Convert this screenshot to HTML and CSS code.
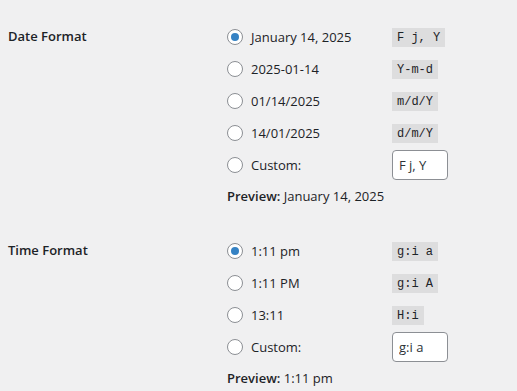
FILE: index.html
```html
<!DOCTYPE html>
<html lang="en">
<head>
  <meta charset="UTF-8">
  <title>General Settings</title>
  <link rel="stylesheet" href="styles.css">
</head>
<body>

  <div class="form-table">

    <div class="row">
      <div class="th">Date Format</div>
      <div class="td">
        <label class="opt">
          <span class="radio checked"></span>
          <span class="date-time-text">January 14, 2025</span>
          <code>F j, Y</code>
        </label>
        <label class="opt">
          <span class="radio"></span>
          <span class="date-time-text">2025-01-14</span>
          <code>Y-m-d</code>
        </label>
        <label class="opt">
          <span class="radio"></span>
          <span class="date-time-text">01/14/2025</span>
          <code>m/d/Y</code>
        </label>
        <label class="opt">
          <span class="radio"></span>
          <span class="date-time-text">14/01/2025</span>
          <code>d/m/Y</code>
        </label>
        <label class="opt">
          <span class="radio"></span>
          <span class="date-time-text">Custom:</span>
          <input class="small-text" type="text" value="F j, Y">
        </label>
        <p class="preview"><strong>Preview:</strong> January 14, 2025</p>
      </div>
    </div>

    <div class="row">
      <div class="th">Time Format</div>
      <div class="td">
        <label class="opt">
          <span class="radio checked"></span>
          <span class="date-time-text">1:11 pm</span>
          <code>g:i a</code>
        </label>
        <label class="opt">
          <span class="radio"></span>
          <span class="date-time-text">1:11 PM</span>
          <code>g:i A</code>
        </label>
        <label class="opt">
          <span class="radio"></span>
          <span class="date-time-text">13:11</span>
          <code>H:i</code>
        </label>
        <label class="opt">
          <span class="radio"></span>
          <span class="date-time-text">Custom:</span>
          <input class="small-text" type="text" value="g:i a">
        </label>
        <p class="preview"><strong>Preview:</strong> 1:11 pm</p>
      </div>
    </div>

  </div>

</body>
</html>
```

FILE: styles.css
```css
body {
  margin: 0;
  padding: 0;
  background-color: #f0f0f1;
  color: #1d2327;
  font-family: 'Open Sans', 'Noto Sans', sans-serif;
  font-size: 13px;
  overflow: hidden;
}

.form-table {
  padding: 21px 0 0 8px;
}

.row {
  display: flex;
  margin-bottom: 24px;
}

.th {
  width: 219px;
  flex-shrink: 0;
  font-weight: 600;
  font-size: 13px;
  line-height: 30px;
}

.td {
  display: flex;
  flex-direction: column;
}

.opt {
  display: flex;
  align-items: center;
  height: 32px;
}

.radio {
  box-sizing: border-box;
  width: 16px;
  height: 16px;
  border: 1px solid #8c8f94;
  border-radius: 50%;
  background: #fff;
  margin-right: 8px;
  display: flex;
  align-items: center;
  justify-content: center;
}

.radio.checked::before {
  content: "";
  width: 8px;
  height: 8px;
  border-radius: 50%;
  background: #3582c4;
}

.date-time-text {
  display: inline-block;
  min-width: 141px;
}

code {
  font-family: 'Liberation Mono', monospace;
  font-size: 12px;
  background: rgba(0, 0, 0, 0.08);
  padding: 3px 5px 2px;
}

.small-text {
  box-sizing: border-box;
  width: 56px;
  height: 30px;
  margin: 0;
  padding: 0 6px;
  border: 1px solid #8c8f94;
  border-radius: 4px;
  background: #fff;
  color: #2c3338;
  font-family: inherit;
  font-size: 13px;
}

.preview {
  margin: 0;
  line-height: 30px;
}

.preview strong {
  font-weight: 600;
}
```
